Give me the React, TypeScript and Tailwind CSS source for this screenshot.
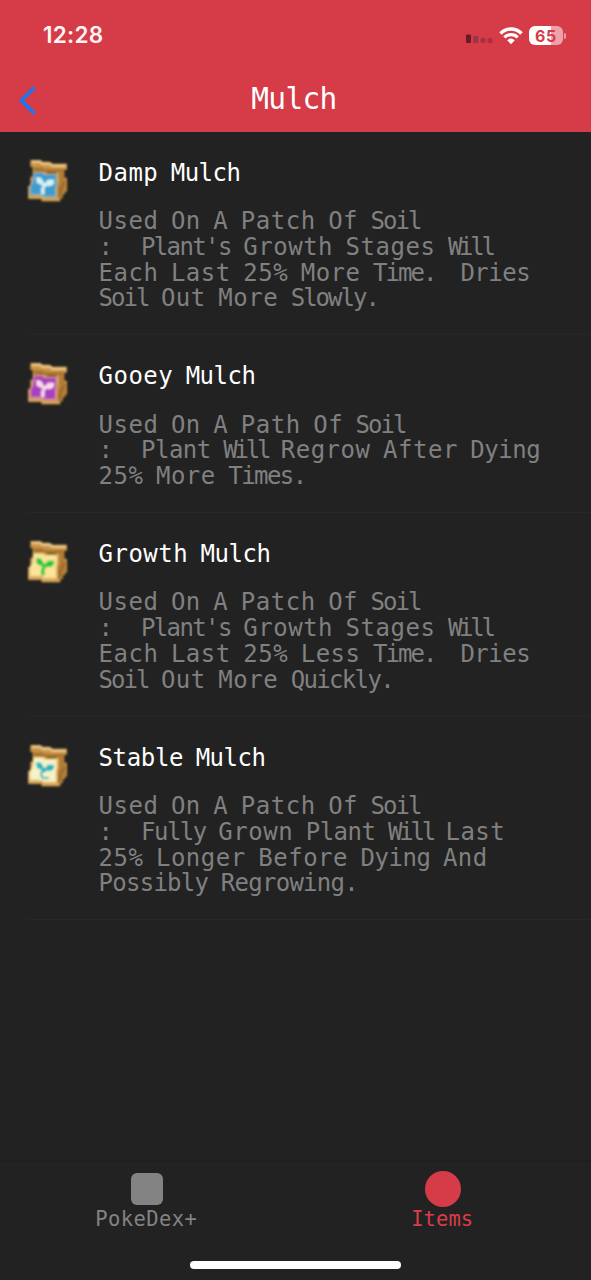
import React from "react";

type Palette = {
  label: string;
  edge: string;
  sprout: string;
  glow: string;
  curled?: boolean;
};

type Item = { name: string; lines: string[]; palette: Palette };

const items: Item[] = [
  {
    name: "Damp Mulch",
    lines: [
      "Used On A Patch Of Soil",
      ":   Plant's Growth Stages Will",
      "Each Last 25% More Time.  Dries",
      "Soil Out More Slowly.",
    ],
    palette: { label: "#3c9bd0", edge: "#8fb0a8", sprout: "#d9f3f4", glow: "#8ccbe4" },
  },
  {
    name: "Gooey Mulch",
    lines: [
      "Used On A Path Of Soil",
      ":   Plant Will Regrow After Dying",
      "25% More Times.",
    ],
    palette: { label: "#a83fc0", edge: "#d5908f", sprout: "#fbdcea", glow: "#cf8cd8" },
  },
  {
    name: "Growth Mulch",
    lines: [
      "Used On A Patch Of Soil",
      ":   Plant's Growth Stages Will",
      "Each Last 25% Less Time.  Dries",
      "Soil Out More Quickly.",
    ],
    palette: { label: "#fae69a", edge: "#f3d78f", sprout: "#20c83c", glow: "#b5da68" },
  },
  {
    name: "Stable Mulch",
    lines: [
      "Used On A Patch Of Soil",
      ":   Fully Grown Plant Will Last",
      "25% Longer Before Dying And",
      "Possibly Regrowing.",
    ],
    palette: { label: "#f7f3c8", edge: "#f4dfa3", sprout: "#25b5bd", glow: "#bfe3cf", curled: true },
  },
];

// Advance of each character, in dots of the seven-dot cap height.
const dots: Record<string, number> = { i: 4, l: 4, "'": 2, ":": 2, ".": 3 };

function DotText({ text, dot, size }: { text: string; dot: number; size: number }) {
  const advance = size * 0.602;
  return (
    <span className="whitespace-pre" style={{ fontSize: size, wordSpacing: dot * 5 - advance }}>
      {text.split(/( +)/).map((word, i) => {
        if (!word || word[0] === " ") return word;
        const width = [...word].reduce((sum, c) => sum + (dots[c] ?? 6) * dot, 0);
        return (
          <span key={i} style={{ letterSpacing: width / word.length - advance }}>
            {word}
          </span>
        );
      })}
    </span>
  );
}

function MulchBag({ palette, id }: { palette: Palette; id: string }) {
  return (
    <svg viewBox="0 0 210 210" className="size-[70px] shrink-0" aria-hidden="true">
      <filter id={id}>
        <feGaussianBlur stdDeviation="2.6" />
      </filter>
      <g filter={`url(#${id})`}>
        <path d="M61 43H92V47H119V53H171V71H163V95H171V137H165V145H158V157H151V166H94V158H54V119H61V92H68V63H61Z" fill="#c99447" />
        <path d="M72 64H100V69H160V78H72Z" fill="#a9752f" />
        <path d="M144 78H161V98L168 102V135L151 153H144Z" fill="#b17d36" />
        <path d="M144 80V112" fill="none" stroke="#d8a65a" strokeWidth="5" />
        <path d="M164 108L150 132V156" fill="none" stroke="#8a5a22" strokeWidth="4" />
        <path d="M111 78H139V83H111Z" fill="#7c551d" />
        <path d="M64 47H90L98 53H120L128 59H168" fill="none" stroke="#ecc583" strokeWidth="8" />
        <path d="M70 79H103V84H142V113L140 120V155H98V149H58V122L66 107Z" fill={palette.edge} />
        <path d="M74 82H99V87H137V113L135 120V149H99V143H63V122L70 110Z" fill={palette.label} />
        <g fill={palette.sprout} stroke={palette.glow} strokeWidth="3" strokeOpacity=".5">
          <path d="M78 94H90L99 103V109L107 110L113 101H132V112L124 120H108L104 127V145H93V128L98 119L80 110Z" />
        </g>
        {palette.curled && (
          <>
            <path d="M88 124H110V147H88Z" fill={palette.label} />
            <path d="M101 116L94 125V136L101 141H117" fill="none" stroke={palette.sprout} strokeWidth="6" />
          </>
        )}
        <path d="M56 152L60 155H97L102 161H148" fill="none" stroke="#dcab60" strokeWidth="6" />
      </g>
    </svg>
  );
}

function StatusBar() {
  return (
    <div className="flex h-[71px] items-center justify-between pr-[25px] pl-[43px]">
      <span className="font-['Inter',sans-serif] text-[22.5px] leading-none font-semibold tracking-[0.25px] text-[#fff5f4]">
        12:28
      </span>
      <div className="flex items-center">
        <svg viewBox="0 0 28 10" className="mt-[7px] mr-[5px] h-[10px] w-[28px]" aria-hidden="true">
          <rect x="0" y="0.5" width="5" height="8.5" rx="1" fill="#681b23" />
          <rect x="7.3" y="2" width="5" height="7" rx="1" fill="#963743" />
          <rect x="14.5" y="4" width="5" height="5" rx="1.5" fill="#aa303c" />
          <rect x="21.5" y="4" width="5" height="5" rx="1.5" fill="#aa303c" />
        </svg>
        <svg viewBox="0 0 24 18" className="mr-[6px] h-[18px] w-[24px]" fill="none" stroke="#fff" aria-hidden="true">
          <path d="M1.5 6.5C7.3 .5 16.7 .5 22.5 6.5" strokeWidth="3.5" />
          <path d="M5.3 10.3C9 6.6 15 6.6 18.7 10.3" strokeWidth="3.2" />
          <path d="M8.2 13.2Q12 10 15.8 13.2L12 17.3Z" fill="#fff" stroke="none" />
        </svg>
        <div className="flex h-[19px] w-[34px] items-center justify-center rounded-[6px] bg-linear-to-r from-white from-65% to-[#eda2aa] to-65%">
          <span className="font-['Inter',sans-serif] text-[16px] leading-none font-bold tracking-[0.8px] text-[#d63b48]">65</span>
        </div>
        <div className="ml-px h-[6px] w-[2px] rounded-r-full bg-[#eda2aa]" />
      </div>
    </div>
  );
}

export default function App() {
  return (
    <div className="flex h-[1280px] w-[591px] flex-col overflow-hidden bg-[#222222] font-['DejaVu_Sans_Mono',monospace]">
      <header className="h-[131.5px] shrink-0 bg-[#d63b48]">
        <StatusBar />
        <div className="grid h-[60px] grid-cols-[60px_1fr_60px] items-center">
          <svg viewBox="0 0 20 30" className="-mt-[2px] ml-[17px] h-[30px] w-[20px]" fill="none" stroke="#1479f5" strokeWidth="3.4" aria-hidden="true">
            <path d="M17.5 2.5L4.3 15.5L17.5 28.5" />
          </svg>
          <h1 className="mt-px pr-[3px] text-center leading-[34px] text-white">
            <DotText text="Mulch" dot={3.05} size={29.5} />
          </h1>
        </div>
      </header>

      <main className="flex-1">
        {items.map((item, i) => (
          <article key={item.name} className="relative flex pt-[29.3px] pb-[22.8px] after:absolute after:right-0 after:bottom-0 after:left-[28px] after:h-px after:bg-[#272728]">
            <div className="-mt-[15px] -mb-[14px] ml-[10px] h-[70px] w-[89px] shrink-0">
              <MulchBag palette={item.palette} id={`soft${i}`} />
            </div>
            <div className="min-w-0 flex-1 -ml-[0.5px]">
              <h2 className="mb-[22.5px] flex h-[25.8px] leading-[25.8px] text-white">
                <DotText text={item.name} dot={2.49} size={24} />
              </h2>
              {item.lines.map((line) => (
                <p key={line} className="flex h-[25.8px] leading-[25.8px] text-[#808080]">
                  <DotText text={line} dot={2.495} size={24} />
                </p>
              ))}
            </div>
          </article>
        ))}
      </main>

      <nav className="flex h-[120px] shrink-0 flex-col border-t-2 border-[#1e1e1e]">
        <div className="grid h-[99px] grid-cols-2">
          <div className="flex flex-col items-center text-[#838383]">
            <div className="mt-[10.5px] mr-[2px] h-[32px] w-[32px] rounded-[6px] bg-[#838383]" />
            <div className="mt-[2px] mr-[3px] leading-[24px]">
              <DotText text="PokeDex+" dot={2.12} size={20.5} />
            </div>
          </div>
          <div className="flex flex-col items-center text-[#dc3c49]">
            <div className="mt-[9px] mr-px h-[35.5px] w-[35.5px] rounded-full bg-[#d63b48]" />
            <div className="mr-[2px] leading-[24px]">
              <DotText text="Items" dot={2.07} size={20.5} />
            </div>
          </div>
        </div>
        <div className="h-[8px] w-[211px] self-center rounded-full bg-white" />
      </nav>
    </div>
  );
}
